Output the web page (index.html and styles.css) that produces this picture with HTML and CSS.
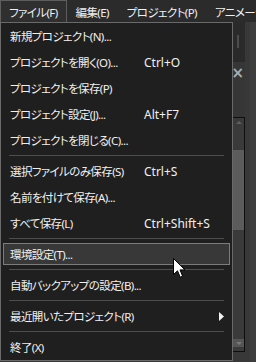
FILE: index.html
```html
<!DOCTYPE html>
<html lang="ja">
<head>
<meta charset="utf-8">
<link rel="stylesheet" href="styles.css">
</head>
<body>
<div class="app">
  <div class="menubar">
    <div class="mb-item active">ファイル(F)</div>
    <div class="mb-item">編集(E)</div>
    <div class="mb-item">プロジェクト(P)</div>
    <div class="mb-item">アニメーション(A)</div>
  </div>
  <div class="workspace">
    <div class="main">
      <div class="toparea"><span class="grip"></span></div>
      <div class="tabarea"><span class="close">×</span></div>
      <div class="panel">
        <div class="panel-body"></div>
        <div class="vscroll">
          <span class="sarrow up"></span>
          <span class="strack-top"></span>
          <span class="sthumb"></span>
          <span class="strack"></span>
          <span class="sarrow down"></span>
        </div>
      </div>
      <div class="bottomarea"></div>
    </div>
    <div class="rightbar"></div>
  </div>
</div>

<div class="dropdown">
  <div class="item"><div class="inner"><span class="label">新規プロジェクト(N)...</span></div></div>
  <div class="item"><div class="inner"><span class="label">プロジェクトを開く(O)...</span><span class="key">Ctrl+O</span></div></div>
  <div class="item"><div class="inner"><span class="label">プロジェクトを保存(P)</span></div></div>
  <div class="item"><div class="inner"><span class="label">プロジェクト設定(J)...</span><span class="key">Alt+F7</span></div></div>
  <div class="item"><div class="inner"><span class="label">プロジェクトを閉じる(C)...</span></div></div>
  <div class="sep"></div>
  <div class="item"><div class="inner"><span class="label">選択ファイルのみ保存(S)</span><span class="key">Ctrl+S</span></div></div>
  <div class="item"><div class="inner"><span class="label">名前を付けて保存(A)...</span></div></div>
  <div class="item"><div class="inner"><span class="label">すべて保存(L)</span><span class="key">Ctrl+Shift+S</span></div></div>
  <div class="sep"></div>
  <div class="item"><div class="inner hl"><span class="label">環境設定(T)...</span></div></div>
  <div class="sep"></div>
  <div class="item"><div class="inner"><span class="label">自動バックアップの設定(B)...</span></div></div>
  <div class="sep"></div>
  <div class="item"><div class="inner"><span class="label">最近開いたプロジェクト(R)</span><svg class="sub" width="5" height="9" viewBox="0 0 5 9"><path d="M0 0 L5 4.5 L0 9 Z" fill="#f2f2f2"/></svg></div></div>
  <div class="sep"></div>
  <div class="item"><div class="inner"><span class="label">終了(X)</span></div></div>
</div>

<svg class="cursor" width="14" height="22" viewBox="0 0 14 22">
  <path d="M0.5 0.5 L0.5 16.5 L4.5 12.8 L7.2 19.2 L9.6 18.2 L7 11.9 L12 11.9 Z" fill="#ffffff" stroke="#000000" stroke-width="1" stroke-linejoin="miter"/>
</svg>
</body>
</html>
```

FILE: styles.css
```css
* { box-sizing: border-box; }
html, body {
  margin: 0;
  padding: 0;
  width: 256px;
  height: 362px;
  overflow: hidden;
  background: #2b2b2b;
  font-family: "Noto Sans", "Noto Sans CJK JP", sans-serif;
  font-size: 12px;
  font-feature-settings: "palt";
  color: #f0f0f0;
}
.app {
  display: flex;
  flex-direction: column;
  height: 362px;
}
.menubar {
  height: 22px;
  display: flex;
  background: #2b2b2b;
  white-space: nowrap;
  overflow: hidden;
}
.mb-item {
  height: 22px;
  padding: 1px 8px 0;
  display: flex;
  align-items: center;
  border: 1px solid transparent;
  font-size: 11.5px;
  letter-spacing: -0.6px;
}
.mb-item.active {
  background: #2f2f2f;
  border-color: #5e5e5e;
  border-bottom: none;
}
.workspace {
  flex: 1;
  display: flex;
}
.main {
  flex: 1;
  display: flex;
  flex-direction: column;
}
.toparea {
  height: 40px;
  background: #2a2a2a;
  display: flex;
  justify-content: flex-end;
  padding: 13px 6px 0 0;
}
.grip {
  width: 2px;
  height: 13px;
  background: #4c4c4c;
}
.tabarea {
  height: 55px;
  background: #363636;
  display: flex;
  justify-content: flex-end;
  padding: 3px 1px 0 0;
}
.close {
  font-family: "DejaVu Sans", sans-serif;
  font-size: 15px;
  line-height: 16px;
  color: #a8aeb0;
  font-weight: bold;
}
.panel {
  flex: 1;
  display: flex;
  border-top: 1px solid #0e0e0e;
  border-bottom: 1px solid #0e0e0e;
  border-right: 1px solid #0e0e0e;
}
.panel-body {
  flex: 1;
  background: #262626;
}
.vscroll {
  width: 11px;
  display: flex;
  flex-direction: column;
  background: #3a3a3a;
}
.sarrow {
  height: 8px;
  display: flex;
  justify-content: center;
  align-items: center;
}
.sarrow.up::after {
  content: "";
  border-left: 3px solid transparent;
  border-right: 3px solid transparent;
  border-bottom: 3px solid #5f5f5f;
}
.sarrow.down {
  background: #555555;
  margin-bottom: 4px;
}
.sarrow.down::after {
  content: "";
  border-left: 3px solid transparent;
  border-right: 3px solid transparent;
  border-top: 3px solid #7a7a7a;
}
.strack-top { height: 24px; }
.sthumb {
  height: 80px;
  background: #5c5c5c;
}
.strack { flex: 1; }
.bottomarea {
  height: 10px;
  background: #383838;
}
.rightbar {
  width: 11px;
  background: #3e3e3e;
  border-left: 5px solid #383838;
}

.dropdown {
  position: absolute;
  top: 22px;
  left: 0;
  width: 233px;
  background: #1f1f1f;
  border: 1px solid #6a6a6a;
}
.item {
  height: 26px;
  padding: 2px;
}
.inner {
  height: 22px;
  border: 1px solid transparent;
  padding-left: 6px;
  display: flex;
  align-items: center;
  white-space: nowrap;
}
.inner.hl {
  background: #383838;
  border-color: #7c7c7c;
}
.label {
  width: 134px;
  flex: none;
  font-size: 11.5px;
  letter-spacing: -0.6px;
}
.key {
  flex: none;
}
.sub {
  margin-left: auto;
  margin-right: 5px;
  flex: none;
}
.sep {
  height: 1px;
  margin: 2px 8px;
  background: #4e4e4e;
}
.cursor {
  position: absolute;
  left: 173px;
  top: 258px;
}
```
